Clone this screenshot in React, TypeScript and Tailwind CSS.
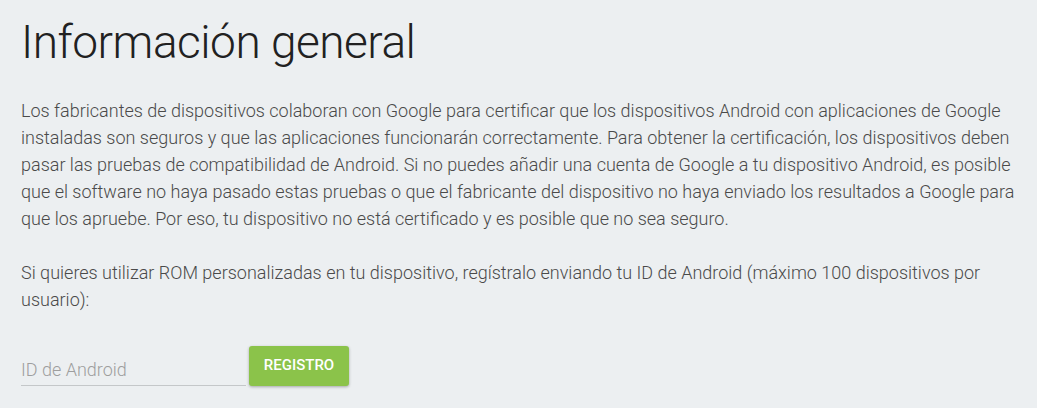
export default function App() {
  return (
    <div className="min-h-screen bg-[#eceff1] px-[21px] pt-[10px] font-['Roboto',sans-serif]">
      <h1 className="text-[46px] font-light leading-[64px] tracking-[-0.5px] text-[#212121]">Información general</h1>

      <div className="mt-[23px] max-w-[1000px] text-[18px] font-light leading-[27px] text-[#4a4a4a]">
        <p>
          Los fabricantes de dispositivos colaboran con Google para certificar que los dispositivos Android con aplicaciones de Google
          instaladas son seguros y que las aplicaciones funcionarán correctamente. Para obtener la certificación, los dispositivos deben
          pasar las pruebas de compatibilidad de Android. Si no puedes añadir una cuenta de Google a tu dispositivo Android, es posible
          que el software no haya pasado estas pruebas o que el fabricante del dispositivo no haya enviado los resultados a Google para
          que los apruebe. Por eso, tu dispositivo no está certificado y es posible que no sea seguro.
        </p>
        <p className="mt-[27px]">
          Si quieres utilizar ROM personalizadas en tu dispositivo, regístralo enviando tu ID de Android (máximo 100 dispositivos por
          usuario):
        </p>
      </div>

      <div className="mt-[33px] flex items-start gap-[3px]">
        <input
          type="text"
          placeholder="ID de Android"
          className="h-[40px] w-[225px] border-b border-[#c4c7c9] bg-transparent pt-[8px] text-[18px] font-light text-[#616161] placeholder:text-[#9e9e9e] focus:outline-none"
        />
        <button className="h-[40px] w-[100px] rounded-[3px] bg-[#8bc34a] pb-[2px] text-[15px] font-medium text-white shadow-[0_1px_3px_rgba(0,0,0,0.3)]">
          REGISTRO
        </button>
      </div>
    </div>
  );
}
